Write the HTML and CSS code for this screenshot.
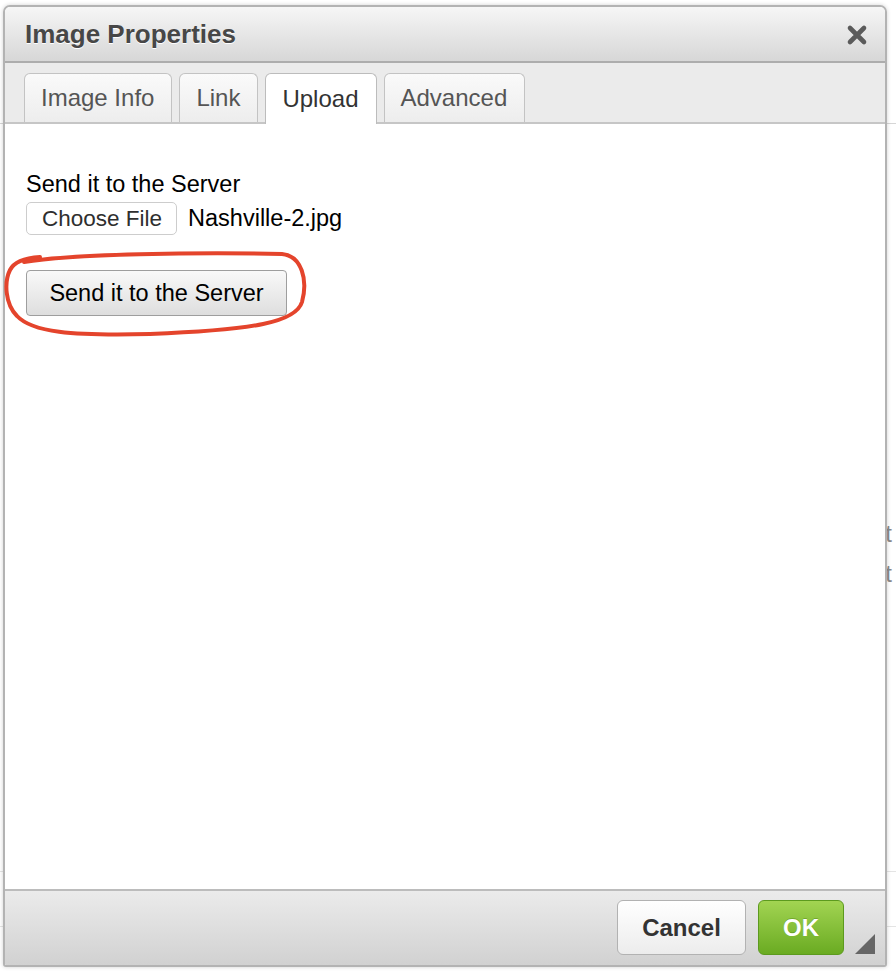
FILE: index.html
```html
<!DOCTYPE html>
<html>
<head>
<meta charset="utf-8">
<title>Image Properties</title>
<link rel="stylesheet" href="styles.css">
</head>
<body>
<div class="backdrop">
  <div class="bd-rule bd-rule-top"></div>
  <div class="bd-lines">
    <p class="bd-line">t</p>
    <p class="bd-line">t</p>
  </div>
  <div class="bd-rule bd-rule-a"></div>
  <div class="bd-rule bd-rule-b"></div>
</div>

<div class="dialog">
  <div class="dlg-title">
    <span class="dlg-title-text">Image Properties</span>
    <span class="dlg-close" aria-label="Close">
      <svg width="22" height="22" viewBox="0 0 22 22"><path d="M4 4 L18 18 M18 4 L4 18" stroke="#5b5b5b" stroke-width="4.6" stroke-linecap="round" fill="none"/></svg>
    </span>
  </div>
  <div class="dlg-tabs">
    <span class="tab">Image Info</span>
    <span class="tab">Link</span>
    <span class="tab tab-active">Upload</span>
    <span class="tab">Advanced</span>
  </div>
  <div class="dlg-body">
    <div class="field-label">Send it to the Server</div>
    <div class="file-row">
      <span class="btn-file">Choose File</span>
      <span class="file-name">Nashville-2.jpg</span>
    </div>
    <div class="send-row">
      <span class="btn-send">Send it to the Server</span>
    </div>
  </div>
  <div class="dlg-footer">
    <span class="btn-cancel">Cancel</span>
    <span class="btn-ok">OK</span>
  </div>
  <span class="resize-handle"></span>
</div>

<svg class="annotation" width="320" height="100" viewBox="0 0 320 100">
  <path d="M24 12 C 70 4, 200 2, 282 4 C 302 6, 308 30, 302 52 C 296 72, 255 80, 150 84 C 70 86, 32 82, 17 66 C 5 54, 4 32, 10 20 C 14 12, 24 8, 40 7" stroke="#e4442c" stroke-width="4" fill="none" stroke-linecap="round" stroke-linejoin="round"/>
</svg>
</body>
</html>
```
FILE: styles.css
```css
html, body {
  margin: 0;
  padding: 0;
  background: #ffffff;
  font-family: "Liberation Sans", Arial, Helvetica, sans-serif;
}

body {
  position: relative;
  width: 896px;
  height: 972px;
  overflow: hidden;
}

/* page content behind the dialog */
.backdrop {
  display: flex;
  flex-direction: column;
  width: 896px;
}
.bd-rule {
  height: 1px;
  background: #d6d6d6;
}
.bd-rule-top {
  margin-top: 123px;
}
.bd-lines {
  margin-top: 390px;
  padding-right: 4px;
  text-align: right;
}
.bd-line {
  margin: 0;
  font-size: 24px;
  line-height: 40px;
  color: #8a8a8a;
}
.bd-rule-a {
  margin-top: 277px;
  background: #e4e4e4;
}
.bd-rule-b {
  margin-top: 54px;
  background: #e4e4e4;
}

/* dialog */
.dialog {
  position: absolute;
  left: 3px;
  top: 5px;
  width: 880px;
  height: 958px;
  border: 2px solid #b3b3b3;
  border-radius: 7px 7px 3px 3px;
  box-shadow: 0 0 4px rgba(0, 0, 0, 0.18);
  display: flex;
  flex-direction: column;
  background: #ffffff;
  overflow: hidden;
}

.dlg-title {
  height: 54px;
  flex: none;
  display: flex;
  align-items: center;
  justify-content: space-between;
  padding: 0 17px 0 20px;
  background: linear-gradient(#f6f6f6, #d7d7d7);
  border-bottom: 2px solid #adadad;
}
.dlg-title-text {
  font-size: 26px;
  font-weight: bold;
  color: #474747;
  text-shadow: 0 1px 0 #ffffff;
}
.dlg-close {
  display: flex;
  width: 22px;
  height: 22px;
  margin-top: 1px;
}

.dlg-tabs {
  height: 59px;
  flex: none;
  display: flex;
  align-items: flex-end;
  gap: 7px;
  padding-left: 19px;
  background: #ebebeb;
  border-bottom: 2px solid #c6c6c6;
}
.tab {
  height: 48px;
  display: flex;
  align-items: center;
  padding: 0 17px 0 16px;
  font-size: 24px;
  color: #555555;
  background: linear-gradient(#fafafa, #ededed);
  border: 1px solid #c3c3c3;
  border-bottom: none;
  border-radius: 6px 6px 0 0;
}
.tab-active {
  height: 50px;
  margin-bottom: -2px;
  background: #ffffff;
  color: #333333;
  border-color: #bcbcbc;
}

.dlg-body {
  flex: 1;
  padding: 46px 0 0 21px;
  display: flex;
  flex-direction: column;
  align-items: flex-start;
}
.field-label {
  font-size: 23.5px;
  line-height: 28px;
  color: #000000;
}
.file-row {
  display: flex;
  align-items: center;
  gap: 11px;
  margin-top: 4px;
}
.btn-file {
  height: 31px;
  display: flex;
  align-items: center;
  padding: 0 14px 0 15px;
  font-size: 22.5px;
  color: #2f2f2f;
  background: #ffffff;
  border: 1px solid #cdcdcd;
  border-radius: 5px;
}
.file-name {
  font-size: 23.5px;
  color: #000000;
}
.send-row {
  margin-top: 35px;
}
.btn-send {
  height: 44px;
  width: 259px;
  display: flex;
  align-items: center;
  justify-content: center;
  font-size: 23.5px;
  color: #000000;
  background: linear-gradient(#f9f9f9, #dedede);
  border: 1px solid #9e9e9e;
  border-radius: 4px;
  box-sizing: content-box;
}

.dlg-footer {
  height: 76px;
  flex: none;
  display: flex;
  align-items: flex-start;
  justify-content: flex-end;
  gap: 12px;
  padding: 9px 41px 0 0;
  box-sizing: border-box;
  background: linear-gradient(#ebebeb, #d1d1d1);
  border-top: 2px solid #bcbcbc;
}
.btn-cancel, .btn-ok {
  height: 53px;
  display: flex;
  align-items: center;
  justify-content: center;
  font-size: 24px;
  font-weight: bold;
  border-radius: 6px;
}
.btn-cancel {
  width: 127px;
  color: #333333;
  background: linear-gradient(#ffffff, #ececec);
  border: 1px solid #b2b2b2;
}
.btn-ok {
  width: 84px;
  color: #ffffff;
  background: linear-gradient(#a2d452, #6aab22);
  border: 1px solid #5c9a1e;
  text-shadow: 0 -1px 0 rgba(60, 110, 10, 0.35);
}

.resize-handle {
  position: absolute;
  right: 10px;
  bottom: 11px;
  width: 0;
  height: 0;
  border-left: 20px solid transparent;
  border-bottom: 20px solid #666666;
}

/* hand-drawn highlight around the send button */
.annotation {
  position: absolute;
  left: 0;
  top: 250px;
}
```
